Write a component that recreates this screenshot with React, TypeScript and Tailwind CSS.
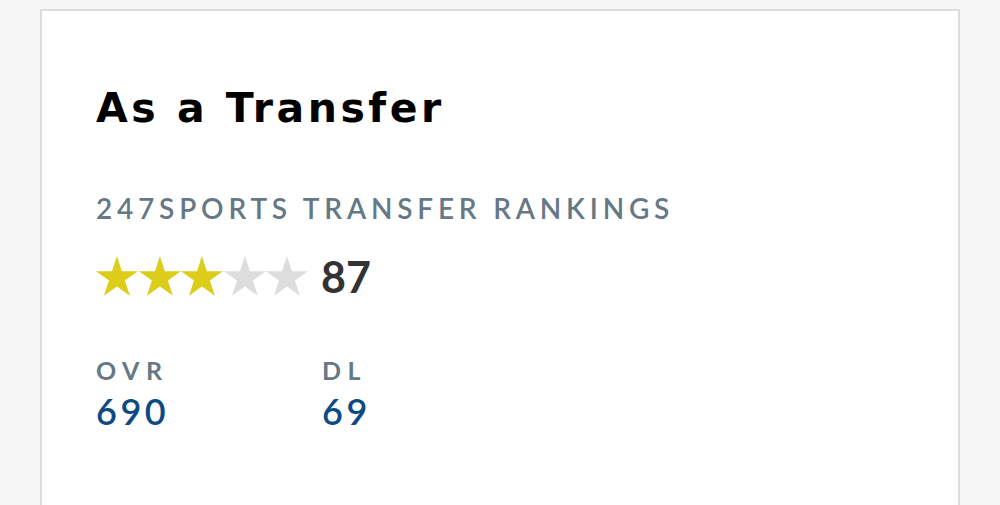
const font = { fontFamily: "Lato, 'Liberation Sans', sans-serif" };
const heading = { fontFamily: "'DejaVu Sans', Lato, sans-serif" };

function Star({ filled }: { filled: boolean }) {
  return (
    <svg width="42" height="40" viewBox="0 0 42 40" className="shrink-0">
      <path
        d="M20.92 0L25.86 15.2L41.84 15.2L28.91 24.6L33.86 39.8L20.92 30.4L7.99 39.8L12.94 24.6L0 15.2L15.98 15.2Z"
        fill={filled ? "#dccd1b" : "#dddddd"}
      />
    </svg>
  );
}

export default function App() {
  const stars = [true, true, true, false, false];

  return (
    <div className="h-[505px] overflow-hidden bg-[#f7f7f7] pl-[40px] pr-[40px] pt-[9px]" style={font}>
      <section className="h-[600px] border-2 border-[#dddddd] bg-white px-[54px] pt-[72px]">
        <h1 className="text-[41px] font-bold leading-[50px] tracking-[3.5px] text-black" style={heading}>
          As a Transfer
        </h1>

        <h2 className="mt-[58px] text-[28px] font-semibold leading-[34px] tracking-[4.8px] text-[#667886]">
          247SPORTS TRANSFER RANKINGS
        </h2>

        <div className="mt-[31px] flex items-start">
          <div className="flex gap-[0.5px]">
            {stars.map((s, i) => (
              <Star key={i} filled={s} />
            ))}
          </div>
          <span className="ml-[13px] mt-[1px] text-[43px] font-bold leading-[40px] text-[#333333]">87</span>
        </div>

        <div className="mt-[59px] flex">
          <div className="w-[226px]">
            <div className="text-[25px] font-bold leading-[29px] tracking-[6.5px] text-[#667886]">OVR</div>
            <div className="mt-[5px] text-[36px] font-semibold leading-[42px] tracking-[3.5px] text-[#0d4a84]">690</div>
          </div>
          <div>
            <div className="text-[25px] font-bold leading-[29px] tracking-[6.5px] text-[#667886]">DL</div>
            <div className="mt-[5px] text-[36px] font-semibold leading-[42px] tracking-[3.5px] text-[#0d4a84]">69</div>
          </div>
        </div>
      </section>
    </div>
  );
}
